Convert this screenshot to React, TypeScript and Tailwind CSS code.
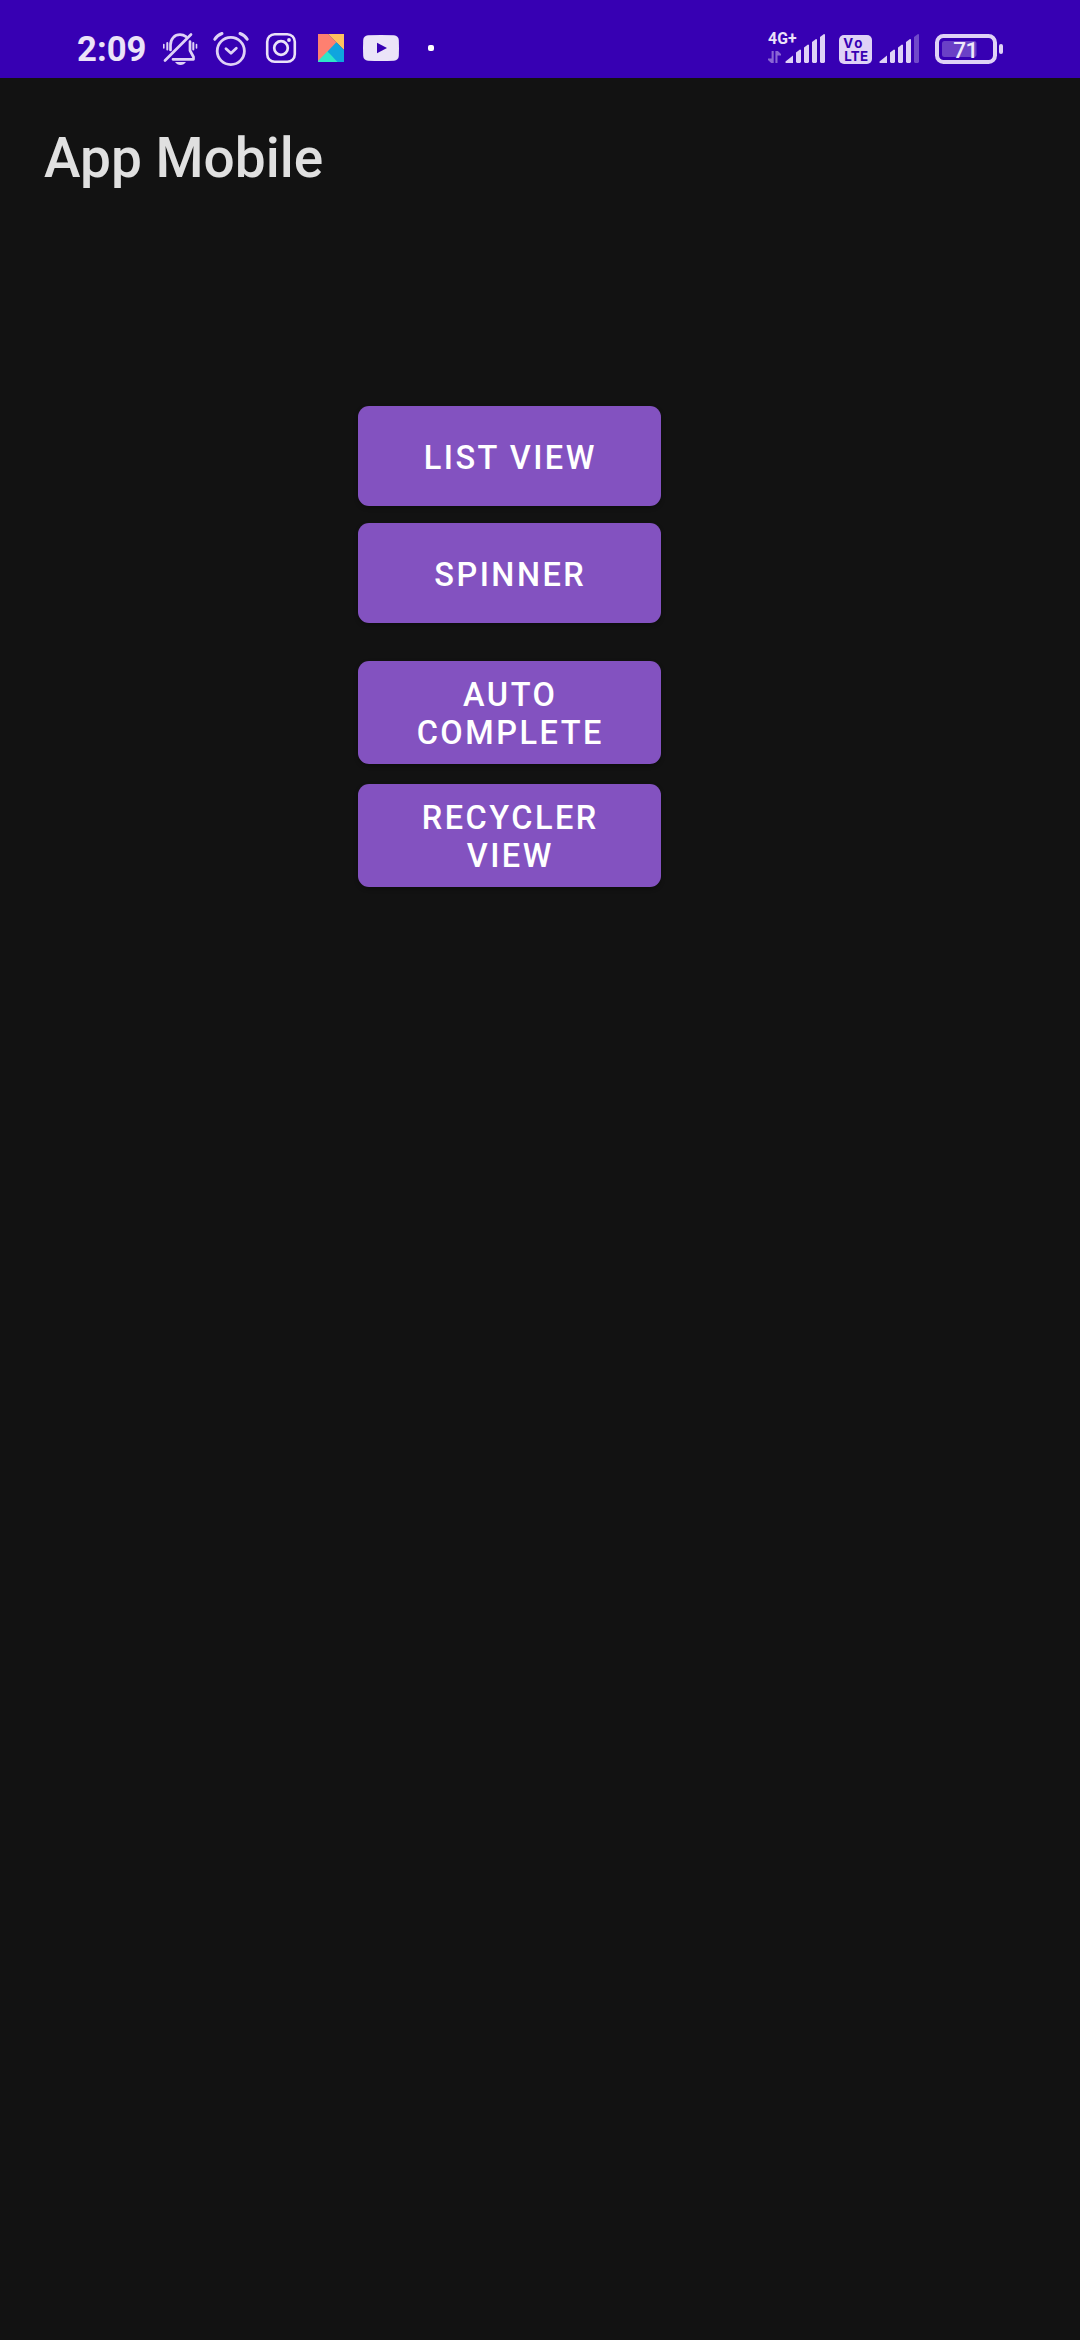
import type { ReactNode } from "react";

const TINT = "#dfd2f6";

function Glyph({ x, w, children }: { x: number; w: number; children: ReactNode }) {
  return (
    <svg className="block shrink-0" width={w} height={78} viewBox={`${x} 0 ${w} 78`} fill="none">
      {children}
    </svg>
  );
}

function MutedBell() {
  return (
    <Glyph x={158} w={46}>
      <g stroke={TINT} strokeWidth="2.7" strokeLinecap="round" strokeLinejoin="round">
        <path d="M165 60.5L191 34.5" />
        <path d="M170.5 50V45C170.5 39 174.5 34.7 180 34.7C182.3 34.7 184.3 35.4 186 36.6" />
        <path d="M190 41.5V50.5L193.5 57V59.3H173" />
        <path d="M167.3 43V49.5M193.3 43V49.5" strokeWidth="2" />
        <path d="M163.8 44.5V48M196.5 44.5V48" strokeWidth="1.6" />
      </g>
      <path d="M175 62H186C184.5 64 183 65 180.500 65C178 65 176.500 64 175 62Z" fill={TINT} />
    </Glyph>
  );
}

function Alarm() {
  return (
    <Glyph x={204} w={54}>
      <circle cx="230.8" cy="51" r="13.600" stroke={TINT} strokeWidth="2.800" />
      <path d="M226 48.700L231 53.200L236.300 48.300" stroke={TINT} strokeWidth="2.800" strokeLinecap="round" strokeLinejoin="round" />
      <path d="M214.800 39.300C216.500 36.500 219 34.500 222 33.500M247.200 39.300C245.500 36.500 243 34.500 240 33.500" stroke={TINT} strokeWidth="3" strokeLinecap="round" />
    </Glyph>
  );
}

function Camera() {
  return (
    <Glyph x={258} w={50}>
      <rect x="267.200" y="34.200" width="27.600" height="27.600" rx="7.500" stroke="#ebe2f8" strokeWidth="2.600" />
      <circle cx="281" cy="48" r="6.800" stroke="#ebe2f8" strokeWidth="2.700" />
      <circle cx="289" cy="40" r="1.900" fill="#ebe2f8" />
    </Glyph>
  );
}

function Kite() {
  return (
    <Glyph x={308} w={46}>
      <path d="M318 34H328L337 43L318 62Z" fill="#fe8070" />
      <path d="M328 34H344V50Z" fill="#ffc05f" />
      <path d="M336.300 42.300L344 50V62H336L327.500 51.500Z" fill="#0fa5de" />
      <path d="M327.500 51.300L337.500 62H318V61Z" fill="#2ee6c8" />
    </Glyph>
  );
}

function Video() {
  return (
    <Glyph x={354} w={54}>
      <path d="M368 35.300Q381 34.700 394 35.300Q398.400 35.700 398.800 40Q399.200 48 398.800 56Q398.400 60.300 394 60.700Q381 61.300 368 60.700Q363.600 60.300 363.200 56Q362.800 48 363.200 40Q363.600 35.700 368 35.300Z" fill="#ebe4f8" />
      <path d="M377 42.800L387 48L377 53.300Z" fill="#3700b3" />
    </Glyph>
  );
}

function Bars({ x, lastFaint }: { x: number; lastFaint?: boolean }) {
  return (
    <g transform={`translate(${x} 0)`} fill={TINT}>
      <path d="M0.500 61.500L8 55.500V63H1.200Q0 63 0.500 61.500Z" />
      <path d="M11 52.500L15 49.500L16 50V62L15 63H12L11 62Z" />
      <path d="M19 47.500L23 44.500L24 45V62L23 63H20L19 62Z" />
      <path d="M27 42L31 39L32 39.500V62L31 63H28L27 62Z" />
      <path d="M35 37L39 34L40 34.500V62L39 63H36L35 62Z" opacity={lastFaint ? 0.35 : 1} />
    </g>
  );
}

function MobileData() {
  return (
    <Glyph x={764} w={66}>
      <text x="768" y="44.200" fontSize="15.800" fontWeight="700" fill="#ebe2f8" textLength="28.600" fontFamily="Roboto, sans-serif">4G+</text>
      <path d="M771.600 51H773.700V63H771.200L768 60V58.500H771.600Z" fill="#8a66d4" />
      <path d="M775.400 63V51H777.900L781 54V55.500H777.500V63Z" fill="#8a66d4" />
      <Bars x={785} />
    </Glyph>
  );
}

function VoLte() {
  return (
    <Glyph x={830} w={46}>
      <rect x="839" y="35" width="33" height="29" rx="5" fill={TINT} />
      <g fontFamily="Inter, sans-serif" fontWeight="700" fill="#3700b3">
        <text x="843.300" y="48.100" fontSize="13.300" textLength="19">Vo</text>
        <text x="844.300" y="61.100" fontSize="13.300" textLength="23.800">LTE</text>
      </g>
    </Glyph>
  );
}

function Battery() {
  return (
    <Glyph x={926} w={82}>
      <rect x="937" y="36" width="58" height="26" rx="6.500" stroke={TINT} strokeWidth="4" />
      <rect x="942" y="41" width="34.500" height="16" rx="2.500" fill="#6a40c6" />
      <rect x="999" y="44" width="4" height="10" rx="2" fill={TINT} />
      <text x="953.300" y="57.700" fontSize="22.600" fontWeight="500" fill="#efe8fa" textLength="25" fontFamily="Roboto, sans-serif">71</text>
    </Glyph>
  );
}

function StatusBar() {
  return (
    <header className="flex h-[78px] w-full bg-[#3700b3]">
      <span className="w-[158px] pt-[29px] pl-[77px] text-[34.7px] leading-[41px] font-bold text-[#ebe2f8]">2:09</span>
      <MutedBell />
      <Alarm />
      <Camera />
      <Kite />
      <Video />
      <span className="mt-[45px] ml-5 size-1.5 rounded-[2px] bg-white" />
      <div className="mr-[72px] ml-auto flex">
        <MobileData />
        <VoLte />
        <Glyph x={876} w={50}>
          <Bars x={879} lastFaint />
        </Glyph>
        <Battery />
      </div>
    </header>
  );
}

function MenuButton({ lines, className }: { lines: string[]; className: string }) {
  return (
    <button
      className={`flex w-[303px] flex-col items-center justify-center rounded-[11px] bg-[#8352c0] pl-[1.5px] text-[32.5px] leading-[38px] font-medium tracking-[2.5px] text-white uppercase shadow-[0_2px_4px_rgba(0,0,0,0.3)] ${className}`}
    >
      {lines.map((line) => (
        <span key={line}>{line}</span>
      ))}
    </button>
  );
}

export default function App() {
  return (
    <div className="flex h-[2340px] w-[1080px] flex-col overflow-hidden bg-[#121212] font-['Roboto',sans-serif]">
      <StatusBar />
      <h1 className="h-[154px] pt-[48px] pl-[44px] text-[55px] leading-[64px] font-medium text-[#e0e0e0]">App Mobile</h1>
      <main className="flex flex-col pt-[174px] pl-[358px]">
        <MenuButton lines={["List View"]} className="h-[100px] pt-[3px]" />
        <MenuButton lines={["Spinner"]} className="mt-[17px] h-[100px] pt-[3px]" />
        <MenuButton lines={["Auto", "Complete"]} className="mt-[38px] h-[103px] pt-0.5" />
        <MenuButton lines={["Recycler", "View"]} className="mt-5 h-[103px] pt-0.5" />
      </main>
    </div>
  );
}
